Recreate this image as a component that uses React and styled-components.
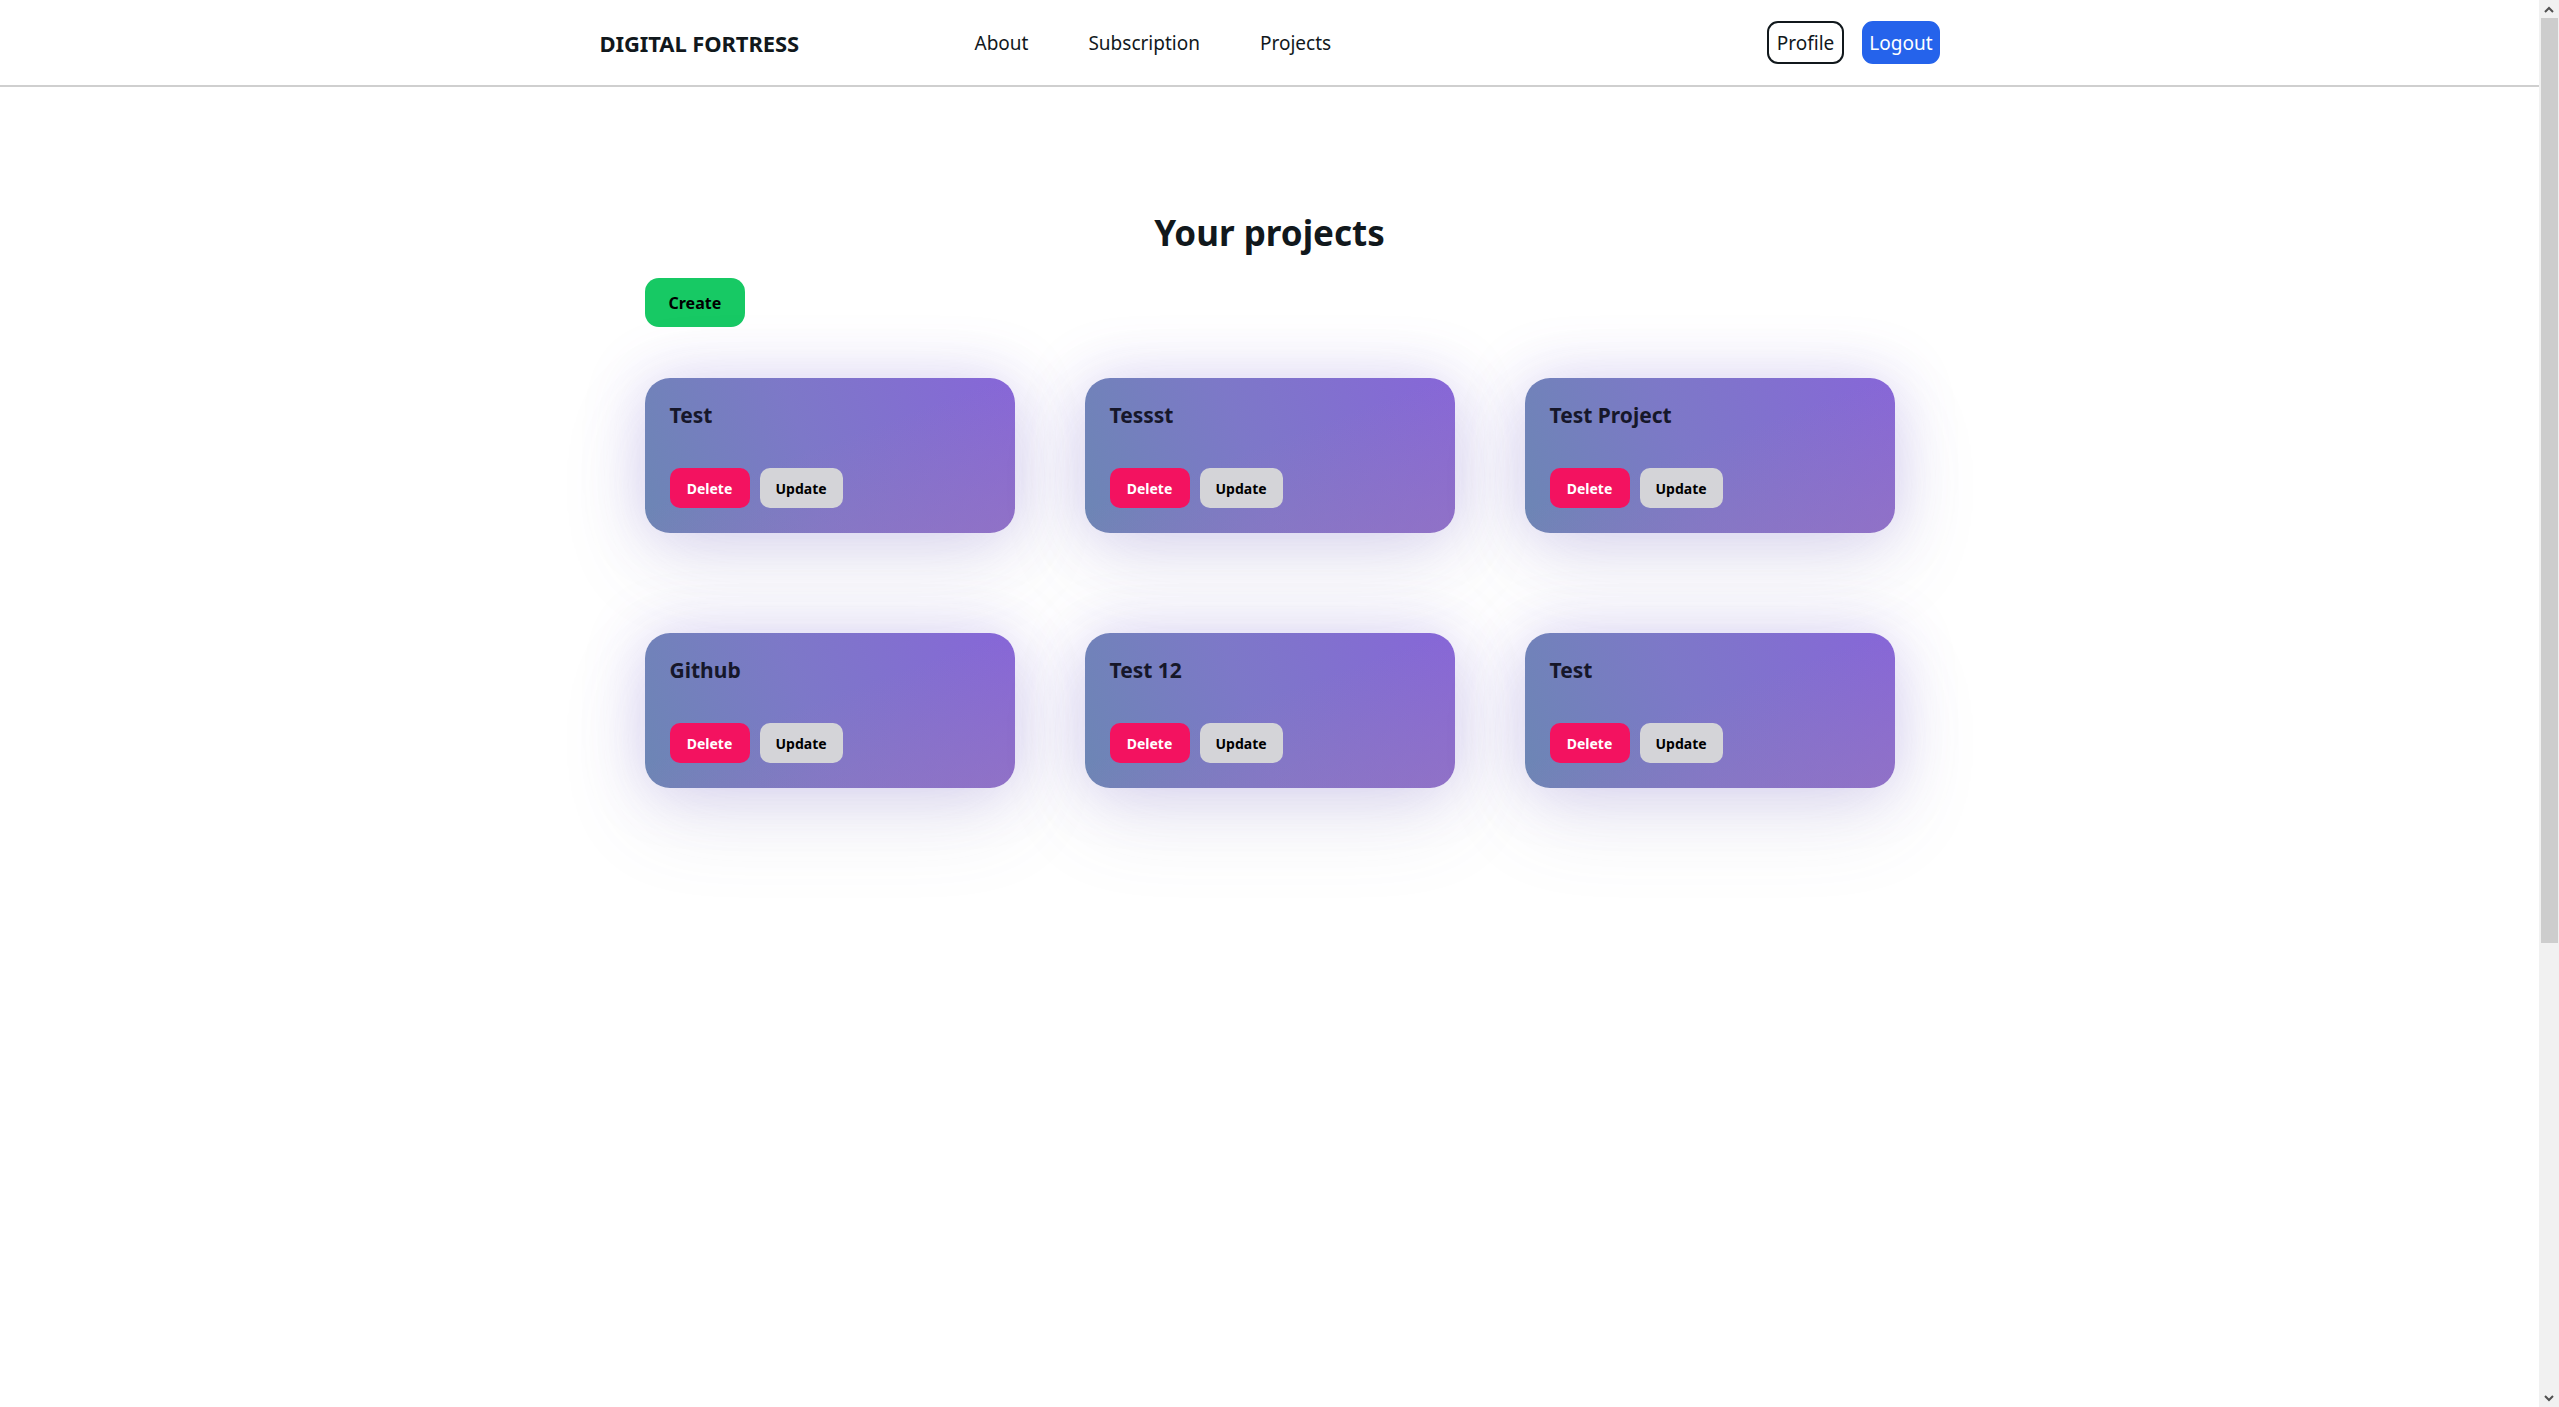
import styled, { createGlobalStyle } from "styled-components";

const GlobalStyle = createGlobalStyle`
  html, body {
    margin: 0;
    padding: 0;
    background: #ffffff;
    font-family: "Noto Sans", "Open Sans", "Liberation Sans", sans-serif;
    color: #11181c;
    overflow: hidden;
  }
  * { box-sizing: border-box; }
`;

const projects = ["Test", "Tessst", "Test Project", "Github", "Test 12", "Test"];

// Browser frame: page on the left, classic scrollbar on the right
const Viewport = styled.div`
  display: flex;
  height: 100vh;
`;

const Page = styled.div`
  flex: 1;
  min-width: 0;
  overflow: hidden;
`;

const ScrollBar = styled.aside`
  width: 20px;
  flex: 0 0 20px;
  background: #f1f1f1;
  display: flex;
  flex-direction: column;
`;

const ScrollArrow = styled.div`
  height: 18px;
  display: flex;
  align-items: center;
  justify-content: center;
  color: #505050;
`;

const ScrollThumb = styled.div`
  height: 925px;
  margin: 0 1px 0 2px;
  background: #cdcdcd;
`;

const ScrollRest = styled.div`
  flex: 1;
`;

// Top navigation bar
const NavBar = styled.header`
  height: 87px;
  border-bottom: 2px solid #cfcfcf;
  display: flex;
  justify-content: center;
`;

const NavInner = styled.nav`
  width: 1340px;
  display: flex;
  align-items: center;
`;

const Brand = styled.div`
  flex: 0 0 375px;
  font-weight: 700;
  font-size: 22px;
  color: #11181c;
  letter-spacing: -0.1px;
`;

const Links = styled.ul`
  list-style: none;
  margin: 0;
  padding: 0;
  display: flex;
  gap: 60px;
  flex: 1;
`;

const NavLink = styled.li`
  font-size: 19px;
  color: #11181c;
  cursor: pointer;
`;

const Actions = styled.div`
  display: flex;
  align-items: center;
  gap: 18px;
`;

const NavButton = styled.button`
  font-family: inherit;
  font-size: 19px;
  height: 43px;
  padding: 0 ${(p) => (p.$primary ? "5px" : "8px")};
  border-radius: 11px;
  cursor: pointer;
  border: 2px solid ${(p) => (p.$primary ? "#2563eb" : "#11181c")};
  background: ${(p) => (p.$primary ? "#2563eb" : "#ffffff")};
  color: ${(p) => (p.$primary ? "#ffffff" : "#11181c")};
`;

const Main = styled.main`
  width: 1250px;
  margin: 0 auto;
  padding: 126px 0 0;
`;

const Title = styled.h1`
  margin: 0 0 25px;
  text-align: center;
  font-size: 35px;
  line-height: 40px;
  font-weight: 700;
  color: #11181c;
`;

const CreateButton = styled.button`
  font-family: inherit;
  height: 49px;
  min-width: 99px;
  padding: 0 24px;
  border: none;
  border-radius: 14px;
  background: #17c964;
  color: #000;
  font-weight: 700;
  font-size: 16px;
  cursor: pointer;
`;

const Grid = styled.section`
  margin-top: 51px;
  display: grid;
  grid-template-columns: repeat(3, 370px);
  column-gap: 70px;
  row-gap: 100px;
`;

const Card = styled.article`
  height: 155px;
  border-radius: 25px;
  padding: 23px 25px;
  background:
    linear-gradient(160deg, rgba(152, 118, 190, 0) 45%, rgba(152, 118, 190, 0.6) 100%),
    linear-gradient(70deg, #6c86b4 0%, #7d78c8 45%, #8766d8 100%);
  box-shadow: 0 0 60px rgba(125, 95, 220, 0.26), 0 30px 90px rgba(100, 100, 150, 0.12);
  display: flex;
  flex-direction: column;
  justify-content: space-between;
`;

const CardTitle = styled.h2`
  margin: 0;
  font-size: 21px;
  font-weight: 700;
  color: #16172a;
`;

const CardActions = styled.div`
  display: flex;
  gap: 10px;
  padding-bottom: 2px;
`;

const SmallButton = styled.button`
  font-family: inherit;
  height: 40px;
  min-width: 80px;
  padding: 0 16px;
  border: none;
  border-radius: 10px;
  font-size: 14px;
  font-weight: 700;
  cursor: pointer;
  background: ${(p) => (p.$danger ? "#f31260" : "#d4d4d8")};
  color: ${(p) => (p.$danger ? "#ffffff" : "#000000")};
`;

const Chevron = ({ up }) => (
  <svg width="10" height="7" viewBox="0 0 10 7">
    <path
      d={up ? "M1 6 L5 2 L9 6" : "M1 1 L5 5 L9 1"}
      fill="none"
      stroke="currentColor"
      strokeWidth="2"
    />
  </svg>
);

const App = () => {
  return (
    <>
      <GlobalStyle />
      <Viewport>
        <Page>
          <NavBar>
            <NavInner>
              <Brand>DIGITAL FORTRESS</Brand>
              <Links>
                <NavLink>About</NavLink>
                <NavLink>Subscription</NavLink>
                <NavLink>Projects</NavLink>
              </Links>
              <Actions>
                <NavButton>Profile</NavButton>
                <NavButton $primary>Logout</NavButton>
              </Actions>
            </NavInner>
          </NavBar>

          <Main>
            <Title>Your projects</Title>
            <CreateButton>Create</CreateButton>
            <Grid>
              {projects.map((name, i) => (
                <Card key={i}>
                  <CardTitle>{name}</CardTitle>
                  <CardActions>
                    <SmallButton $danger>Delete</SmallButton>
                    <SmallButton>Update</SmallButton>
                  </CardActions>
                </Card>
              ))}
            </Grid>
          </Main>
        </Page>
        <ScrollBar>
          <ScrollArrow>
            <Chevron up />
          </ScrollArrow>
          <ScrollThumb />
          <ScrollRest />
          <ScrollArrow>
            <Chevron />
          </ScrollArrow>
        </ScrollBar>
      </Viewport>
    </>
  );
};

export default App;
